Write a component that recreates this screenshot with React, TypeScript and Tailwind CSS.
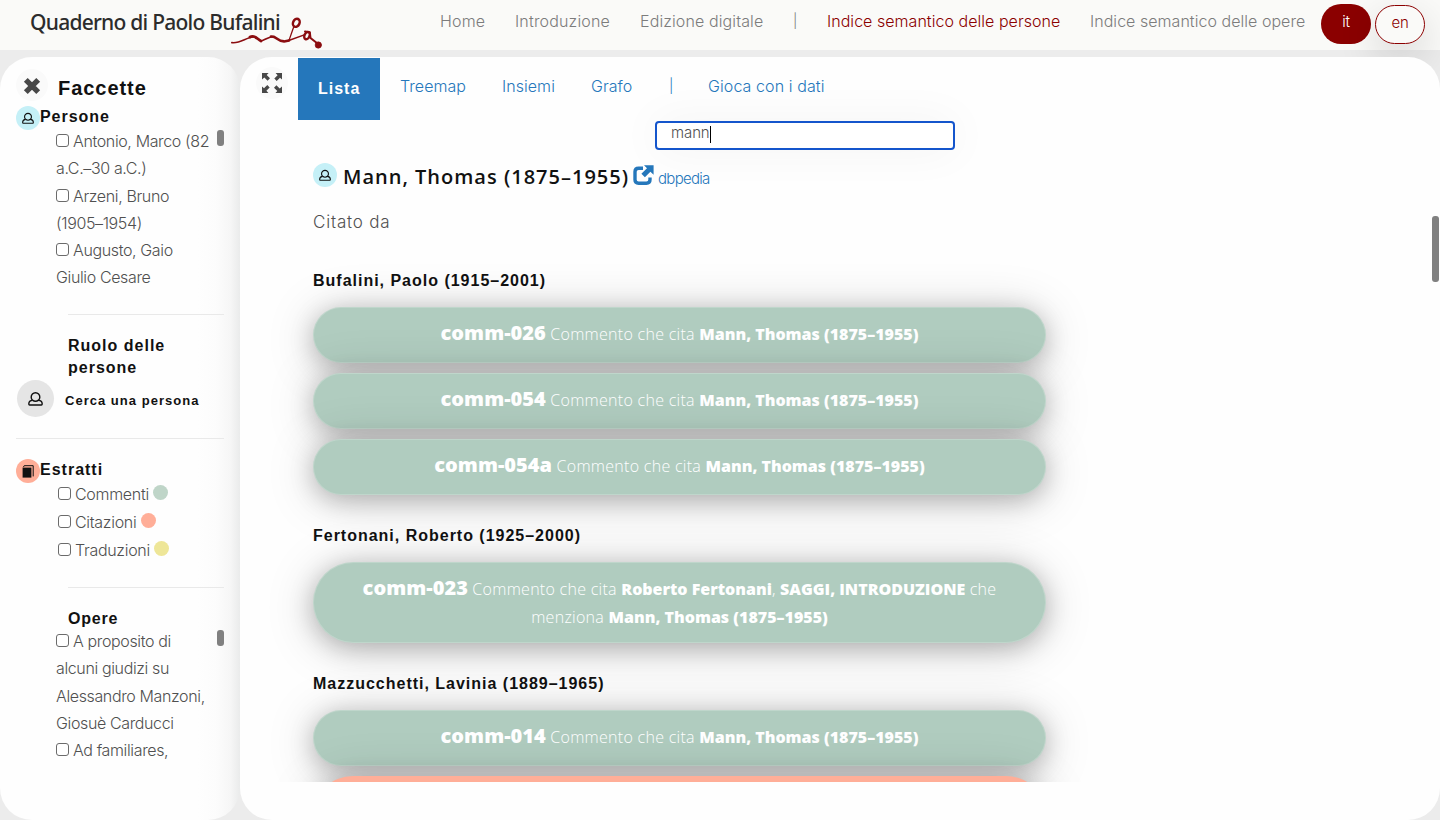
import type { ReactNode } from "react";

function PersonIcon({ className }: { className: string }) {
  return (
    <svg viewBox="0 0 16 16" className={className} fill="none" stroke="#111" strokeWidth="1.5" strokeLinejoin="round">
      <path d="M4.9 9.9A4.6 4.6 0 1 1 11.1 9.9C13.6 10.2 15 11 15.1 13.4Q15.2 15 14.2 15H1.8Q.8 15 .9 13.4C1 11 2.4 10.2 4.9 9.9" />
      <path d="M4.7 9.7Q8 12.2 11.3 9.7" />
    </svg>
  );
}

function BookIcon() {
  return (
    <svg viewBox="0 0 12 13" className="mt-px h-[13px] w-3">
      <path d="M0.6 2.6H9.4V12.6H0.6Z" fill="#111" />
      <path d="M1.4 2.2L2.2 0.7H11.2V11.4" fill="none" stroke="#111" strokeWidth="1" />
    </svg>
  );
}

function CloseIcon() {
  return (
    <svg viewBox="0 0 18 18" className="size-[18px]">
      <path d="M2.8 2.8L15.2 15.2M15.2 2.8L2.8 15.2" stroke="#484848" strokeWidth="5.4" />
    </svg>
  );
}

function ExpandIcon() {
  return (
    <svg viewBox="0 0 20 20" className="size-5" fill="#484848">
      {["", "rotate(90 10 10)", "rotate(180 10 10)", "rotate(270 10 10)"].map((t) => (
        <path key={t} transform={t} d="M0 0H6.6L4.7 2L8 5.3L5.6 7.7L2.3 4.4L0 6.4Z" />
      ))}
    </svg>
  );
}

function ExternalIcon() {
  return (
    <svg viewBox="0 0 21 21" className="size-[21px]">
      <path d="M10 3.2H5.6Q2 3.2 2 6.8V14.8Q2 18.2 5.6 18.2H13.4Q17 18.2 17 14.8V12.6" fill="none" stroke="#2577bb" strokeWidth="3.4" />
      <path d="M11 .2H20.6V9.8L17.4 6.8L11.9 12.2L8.4 8.8L14 3.3Z" fill="#2577bb" />
    </svg>
  );
}

function Squiggle() {
  return (
    <svg viewBox="0 0 93 33" className="absolute top-[17px] left-[201px] h-[33px] w-[93px]" fill="none" stroke="#8b0d10" strokeLinecap="round" strokeLinejoin="round">
      <path d="M.8 25.6C9 26.8 15 20.5 22 20" strokeWidth="1.6" />
      <path d="M19 20C24 17.6 26 22 30 24" strokeWidth="2.8" />
      <path d="M30 24C34 23.5 37 19.5 43 19.6" strokeWidth="1.7" />
      <path d="M40 19.6C45 18.4 46 24.3 53 24.4L58 23.4" strokeWidth="2.6" />
      <path d="M58 23.4L62.5 10.5" strokeWidth="1.3" />
      <path d="M57 23.8L74 17.6" strokeWidth="1.5" />
      <ellipse cx="65.3" cy="5.8" rx="3.2" ry="4.2" transform="rotate(25 65.3 5.8)" strokeWidth="2.5" />
      <ellipse cx="76" cy="18.6" rx="2.5" ry="3.8" transform="rotate(25 76 18.6)" strokeWidth="2.4" />
      <path d="M74 14.4L78.8 15.2L79.5 21L86.5 26.5" strokeWidth="2" />
      <circle cx="87.3" cy="28" r="3.2" fill="#8b0d10" strokeWidth="0.6" />
    </svg>
  );
}

function Box() {
  return <span className="mr-1 inline-block size-[13px] rounded-[3px] border border-[#6b6b6b] bg-white align-[0px]" />;
}

function FacetList({ items }: { items: string[][] }) {
  return (
    <ul className="-mt-[2px] ml-10 text-[16px] leading-[27.3px] font-light tracking-[-0.37px] whitespace-nowrap text-[#505050]">
      {items.map((lines) => (
        <li key={lines[0]}>
          {lines.map((l, i) => (
            <div key={l}>
              {i === 0 && <Box />}
              {l}
            </div>
          ))}
        </li>
      ))}
    </ul>
  );
}

function Thumb() {
  return <span className="mr-4 h-4 w-[7px] shrink-0 rounded-[3px] bg-[#808080]" />;
}

function Badge({ color, children }: { color: string; children: ReactNode }) {
  return <span className={"flex size-6 shrink-0 items-center justify-center rounded-full " + color}>{children}</span>;
}

const heading = "font-['Liberation_Sans',sans-serif] font-bold text-[#111]";

function Sidebar() {
  return (
    <aside className="flex h-[763px] w-60 shrink-0 flex-col rounded-[32px] bg-[linear-gradient(to_right,#fefefe_82%,#fcfcfc_90%,#f6f6f6_96%,#eaebeb_100%)] pl-4">
      <div className="mt-3 flex h-8 items-center">
        <span className="flex size-8 items-center justify-center rounded-full bg-[#fafafa] pt-px">
          <CloseIcon />
        </span>
        <h2 className={heading + " ml-[10px] pt-[5px] text-[20px] leading-6 tracking-[0.95px]"}>Faccette</h2>
      </div>
      <div className="mt-[5px] flex h-6">
        <Badge color="bg-[#c5f0f7]"><PersonIcon className="size-3" /></Badge>
        <h3 className={heading + " text-[16px] leading-[22px] tracking-[0.95px]"}>Persone</h3>
      </div>
      <div className="flex h-[161px] justify-between overflow-hidden">
        <FacetList items={[["Antonio, Marco (82", "a.C.–30 a.C.)"], ["Arzeni, Bruno", "(1905–1954)"], ["Augusto, Gaio", "Giulio Cesare"]]} />
        <Thumb />
      </div>
      <hr className="mt-[23px] mr-4 ml-[52px] border-[#e9e9e9]" />
      <h3 className={heading + " mt-5 ml-[52px] text-[16px] leading-[22px] tracking-[1px]"}>Ruolo delle<br />persone</h3>
      <div className="mt-[1px] ml-px flex h-[37px] items-center">
        <span className="flex size-[37px] items-center justify-center rounded-full bg-[#e5e5e5]">
          <PersonIcon className="size-[15px]" />
        </span>
        <span className={heading + " ml-[11px] pt-[5px] text-[13px] leading-4 tracking-[1.02px]"}>Cerca una persona</span>
      </div>
      <hr className="mt-[21px] mr-4 border-[#e9e9e9]" />
      <div className="mt-5 flex h-6">
        <Badge color="bg-[#ffae98]"><BookIcon /></Badge>
        <h3 className={heading + " text-[16px] leading-[22px] tracking-[1px]"}>Estratti</h3>
      </div>
      <ul className="-mt-[3px] ml-[42px] text-[16px] leading-7 font-light tracking-[-0.3px] text-[#505050]">
        <li><Box />Commenti <i className="inline-block size-[15px] rounded-full bg-[#bfd5c8]" /></li>
        <li><Box />Citazioni <i className="inline-block size-[15px] rounded-full bg-[#ffae98]" /></li>
        <li><Box />Traduzioni <i className="inline-block size-[15px] rounded-full bg-[#eee698]" /></li>
      </ul>
      <hr className="mt-[23px] mr-4 ml-[52px] border-[#e9e9e9]" />
      <h3 className={heading + " mt-5 ml-[52px] text-[16px] leading-[22px] tracking-[0.8px]"}>Opere</h3>
      <div className="flex h-[136px] justify-between overflow-hidden">
        <FacetList items={[["A proposito di", "alcuni giudizi su", "Alessandro Manzoni,", "Giosuè Carducci"], ["Ad familiares,"]]} />
        <Thumb />
      </div>
    </aside>
  );
}

function Card({ children, tall }: { children: ReactNode; tall?: boolean }) {
  return (
    <div
      className={
        "flex w-[733px] shrink-0 justify-center rounded-[42px] border border-white/20 bg-[#b0ccbf] bg-clip-border px-10 pt-[11px] text-center font-['Open_Sans',sans-serif] text-[16px] leading-7 font-light tracking-[0.28px] text-white shadow-[0_5px_50px_rgba(0,0,0,0.18),0_5px_24px_rgba(0,0,0,0.22)] " +
        (tall ? "h-[81px]" : "h-14")
      }
    >
      <p>{children}</p>
    </div>
  );
}

function Strong({ children }: { children: ReactNode }) {
  return <b className="font-extrabold tracking-normal">{children}</b>;
}

function Code({ children }: { children: ReactNode }) {
  return <b className="text-[20px] font-extrabold tracking-[0.04px]">{children}</b>;
}

function Cite({ id }: { id: string }) {
  return (
    <Card>
      <Code>{id}</Code> Commento che cita <Strong>Mann, Thomas (1875–1955)</Strong>
    </Card>
  );
}

function Author({ children }: { children: ReactNode }) {
  return <h4 className={heading + " text-[16px] leading-[22px] tracking-[0.99px]"}>{children}</h4>;
}

function Main() {
  return (
    <main className="flex h-[763px] w-[1200px] shrink-0 flex-col overflow-hidden rounded-[32px] bg-[#fefefe]">
      <div className="flex h-[63px] items-start pt-px pl-4 text-[16px] font-light text-[#2577bb]">
        <span className="mt-[9px] flex size-8 items-center justify-center rounded-full bg-[#fafafa]">
          <ExpandIcon />
        </span>
        <a className="ml-[10px] h-[62px] w-[82px] bg-[#2577bb] pt-[19px] pl-5 font-['Liberation_Sans',sans-serif] leading-6 font-bold tracking-[1px] text-white">Lista</a>
        <div className="flex pt-4 leading-6">
          <a className="ml-5 w-[102px] tracking-[0.05px]">Treemap</a>
          <a className="w-[89px] tracking-[0.05px]">Insiemi</a>
          <a className="w-[78px] tracking-[0.05px]">Grafo</a>
          <span className="w-[39px] text-[14px]">|</span>
          <a className="tracking-[0.09px]">Gioca con i dati</a>
        </div>
      </div>
      <div className="mt-px ml-[415px] flex h-[29px] w-[300px] shrink-0 items-start rounded-[4px] border-2 border-[#1455cc] bg-white pt-px pl-[14px] text-[15px] leading-[18px] font-light tracking-[-0.1px] text-[#505050] shadow-[0_0_45px_rgba(0,0,0,0.05)]">
        <span>mann</span>
        <span className="mt-[2px] h-[17px] w-px bg-black" />
      </div>
      <div className="flex h-[632px] shrink-0 flex-col overflow-hidden pl-[73px]">
        <div className="mt-[13px] flex h-7 shrink-0 items-start">
          <Badge color="bg-[#c5f0f7]"><PersonIcon className="size-3" /></Badge>
          <h2 className="ml-[6px] w-[290px] font-['Open_Sans',sans-serif] text-[20px] leading-7 font-semibold tracking-[1px] whitespace-nowrap text-[#111]">Mann, Thomas (1875–1955)</h2>
          <span className="mt-[2px]"><ExternalIcon /></span>
          <a className="ml-1 pt-1 text-[15px] leading-6 font-light tracking-[-0.7px] text-[#2577bb]">dbpedia</a>
        </div>
        <p className="mt-[19px] mb-px text-[17px] leading-6 font-light tracking-[0.8px] text-[#505050]">Citato da</p>
        <div className="mt-[35px]"><Author>Bufalini, Paolo (1915–2001)</Author></div>
        <div className="mt-[15px] flex flex-col gap-[10px]">
          <Cite id="comm-026" />
          <Cite id="comm-054" />
          <Cite id="comm-054a" />
        </div>
        <div className="mt-[30px]"><Author>Fertonani, Roberto (1925–2000)</Author></div>
        <div className="mt-[15px]">
          <Card tall>
            <Code>comm-023</Code> Commento che cita <Strong>Roberto Fertonani</Strong>, <Strong>SAGGI, INTRODUZIONE</Strong> che<br />
            menziona <Strong>Mann, Thomas (1875–1955)</Strong>
          </Card>
        </div>
        <div className="mt-[30px]"><Author>Mazzucchetti, Lavinia (1889–1965)</Author></div>
        <div className="mt-[15px] flex shrink-0 flex-col gap-[10px]">
          <Cite id="comm-014" />
          <div className="h-20 w-[733px] shrink-0 rounded-[40px] bg-[#ffae98] shadow-[0_5px_50px_rgba(0,0,0,0.18),0_5px_24px_rgba(0,0,0,0.22)]" />
        </div>
      </div>
      <span className="absolute top-[216px] left-[1432px] h-[66px] w-[7px] rounded-[3px] bg-[#808080]" />
    </main>
  );
}

export default function App() {
  return (
    <div className="relative h-[820px] w-[1440px] overflow-hidden bg-[#ececec] font-['Inter',sans-serif]">
      <header className="flex h-[50px] bg-[#fafaf8] text-[16px] font-light text-[#7c7c7c]">
        <div className="relative w-[440px] pt-2 pl-[30px]">
          <span className="font-['Noto_Sans',sans-serif] text-[21px] leading-7 font-medium tracking-[-0.75px] whitespace-nowrap text-[#2c2c2c]">Quaderno di Paolo Bufalini</span>
          <div className="absolute top-0 left-[30px]"><Squiggle /></div>
        </div>
        <nav className="flex pt-[9px] leading-6 whitespace-nowrap">
          <a className="w-[75px] tracking-[0.15px]">Home</a>
          <a className="w-[125px] tracking-[0.17px]">Introduzione</a>
          <a className="w-[153px] tracking-[0.11px]">Edizione digitale</a>
          <span className="w-[34px] text-[14px]">|</span>
          <a className="w-[263px] tracking-[0.04px] text-[#8b0000]">Indice semantico delle persone</a>
          <a className="w-[231px] tracking-[0.04px]">Indice semantico delle opere</a>
        </nav>
        <div className="flex gap-1 pt-1 text-center text-[15px] leading-[35px] tracking-[-0.2px]">
          <span className="h-10 w-[50px] rounded-[20px] bg-[#8b0000] text-white">it</span>
          <span className="mt-px h-[39px] w-[50px] rounded-[20px] border border-[#8b0000] leading-[33px] text-[#8b0000] shadow-[0_14px_40px_rgba(0,0,0,0.16)]">en</span>
        </div>
      </header>
      <div className="mt-[7px] flex">
        <Sidebar />
        <Main />
      </div>
    </div>
  );
}
